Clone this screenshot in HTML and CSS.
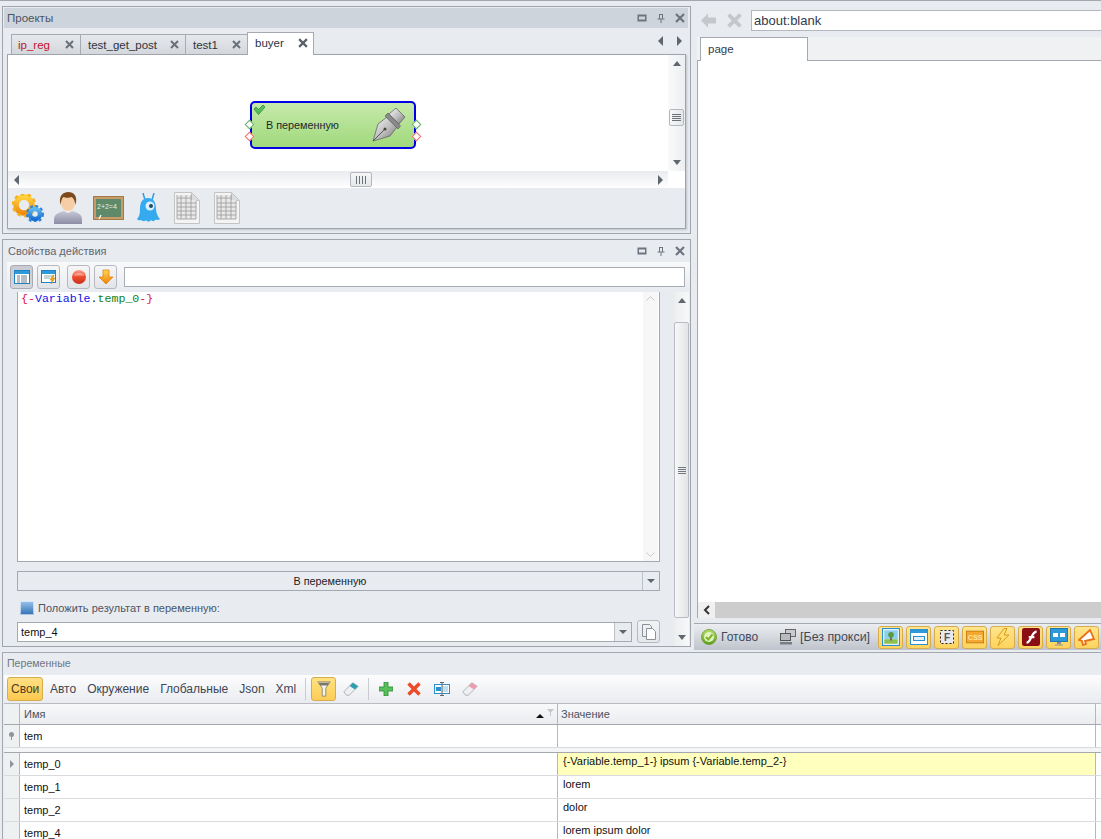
FILE: index.html
```html
<!DOCTYPE html>
<html lang="ru">
<head>
<meta charset="utf-8">
<title>Проекты</title>
<link rel="stylesheet" href="styles.css">
</head>
<body>
<svg class="defs" aria-hidden="true"><defs>
<linearGradient id="gSteel" x1="0" y1="0" x2="1" y2="1"><stop offset="0" stop-color="#f8f8f8"/><stop offset=".55" stop-color="#bcbcbc"/><stop offset="1" stop-color="#707070"/></linearGradient>
<linearGradient id="gGear" x1="0" y1="0" x2="0" y2="1"><stop offset="0" stop-color="#ffd23c"/><stop offset="1" stop-color="#f08a10"/></linearGradient>
<linearGradient id="gGearB" x1="0" y1="0" x2="0" y2="1"><stop offset="0" stop-color="#5cb8f0"/><stop offset="1" stop-color="#1a6fd0"/></linearGradient>
<linearGradient id="gBody" x1="0" y1="0" x2="0" y2="1"><stop offset="0" stop-color="#c8c8d8"/><stop offset="1" stop-color="#8c8ca4"/></linearGradient>
<linearGradient id="gRed" x1="0" y1="0" x2="0" y2="1"><stop offset="0" stop-color="#f8a08c"/><stop offset=".5" stop-color="#ee4b2c"/><stop offset="1" stop-color="#c8301c"/></linearGradient>
<linearGradient id="gOrange" x1="0" y1="0" x2="0" y2="1"><stop offset="0" stop-color="#ffd84a"/><stop offset="1" stop-color="#f08010"/></linearGradient>
<linearGradient id="gGreen" x1="0" y1="0" x2="0" y2="1"><stop offset="0" stop-color="#b6e06a"/><stop offset="1" stop-color="#5c9e1c"/></linearGradient>
<linearGradient id="gBlue" x1="0" y1="0" x2="0" y2="1"><stop offset="0" stop-color="#9cc4ec"/><stop offset="1" stop-color="#2f6fb4"/></linearGradient>
</defs></svg>

<div class="app">
  <div class="top">
    <div class="left">
      <section class="panel projects">
        <header class="title title-active">
          <span class="title-text">Проекты</span>
          <span class="win-btns">
            <svg class="w" viewBox="0 0 10 8"><path d="M.5.5h9v7h-9zM2 2.500h6v3H2z" fill="#6d7480" fill-rule="evenodd"/></svg>
            <svg class="w" viewBox="0 0 10 10"><path d="M3 1h4v4.500h1.500V6.500H5.500V10h-1V6.500H1.500V5.500H3zM4 2v3.500h2V2z" fill="#6d7480" fill-rule="evenodd"/></svg>
            <svg class="w" viewBox="0 0 10 10"><path d="M1 1l8 8M9 1L1 9" stroke="#6d7480" stroke-width="2.200"/></svg>
          </span>
        </header>
        <div class="tabs">
          <div class="tab tab-ip"><span class="red">ip_reg</span><svg class="x" viewBox="0 0 9 9"><path d="M1 1l7 7M8 1L1 8" stroke="#6a7078" stroke-width="2"/></svg></div>
          <div class="tab tab-post"><span>test_get_post</span><svg class="x" viewBox="0 0 9 9"><path d="M1 1l7 7M8 1L1 8" stroke="#6a7078" stroke-width="2"/></svg></div>
          <div class="tab tab-t1"><span>test1</span><svg class="x" viewBox="0 0 9 9"><path d="M1 1l7 7M8 1L1 8" stroke="#6a7078" stroke-width="2"/></svg></div>
          <div class="tab tab-on"><span>buyer</span><svg class="x" viewBox="0 0 9 9"><path d="M1 1l7 7M8 1L1 8" stroke="#5b626c" stroke-width="2"/></svg></div>
          <div class="tab-nav"><i class="arr arr-l"></i><i class="arr arr-r"></i></div>
        </div>
        <div class="box">
          <div class="canvas-row">
            <div class="canvas">
              <div class="node">
                <svg class="node-check" viewBox="0 0 12 10"><path d="M1 4l2-2 2.500 2.500L10 0l2 2-6.500 7.500z" fill="#56c05a" stroke="#2e8a3a" stroke-width=".8"/></svg>
                <span class="node-text">В переменную</span>
                <svg class="nib" viewBox="0 0 34 34"><path d="M15 9L6 16 1 33 18 28 25 19z" fill="url(#gSteel)" stroke="#666" stroke-width=".8"/><path d="M1 33L12 22" stroke="#555"/><circle cx="13" cy="21" r="1.500" fill="#444"/><path d="M13 8l13 13 2.500-3L16 5z" fill="#8a8a8a" stroke="#555" stroke-width=".6"/><path d="M17 6L24 0l9 9-6 7z" fill="url(#gSteel)" stroke="#666" stroke-width=".8"/></svg>
                <i class="port port-g port-lt"></i><i class="port port-r port-lb"></i>
                <i class="port port-g port-rt"></i><i class="port port-r port-rb"></i>
              </div>
            </div>
            <div class="vbar">
              <i class="arr arr-u"></i>
              <div class="vthumb"><b></b><b></b><b></b><b></b></div>
              <i class="arr arr-d"></i>
            </div>
          </div>
          <div class="hbar">
            <i class="arr arr-l"></i>
            <div class="hthumb"><b></b><b></b><b></b><b></b></div>
            <i class="arr arr-r"></i>
          </div>
          <div class="tools">
            <svg class="t-gears" viewBox="0 0 32 28"><circle cx="12" cy="11" r="8" fill="none" stroke="url(#gGear)" stroke-width="5.500"/><circle cx="12" cy="11" r="11" fill="none" stroke="#f7b020" stroke-width="2.500" stroke-dasharray="3.500 3.400"/><circle cx="23" cy="20" r="5" fill="none" stroke="url(#gGearB)" stroke-width="4.500"/><circle cx="23" cy="20" r="8" fill="none" stroke="#2a84dc" stroke-width="2" stroke-dasharray="3 2.400"/></svg>
            <svg class="t-user" viewBox="0 0 28 32"><path d="M0 32v-5c0-5 6-7 10-8h8c4 1 10 3 10 8v5z" fill="url(#gBody)"/><path d="M10 19l4 2 4-2-1-3h-6z" fill="#f0f0f0"/><ellipse cx="14" cy="11" rx="7" ry="8" fill="#f6cda4"/><path d="M6.500 13C4 3 10 0 14 0c6 0 10 4 7.500 13-.5-4-2-7-4-8-2 1-6 1-8 0-1.500 1-2.500 4-3 8z" fill="#7c4a1c"/></svg>
            <svg class="t-board" viewBox="0 0 31 24"><rect x=".5" y=".5" width="30" height="23" fill="#c89c68" stroke="#a27a4a"/><rect x="3" y="3" width="25" height="18" fill="#5f8a6a"/><text x="4" y="13" class="bt">2+2=4</text><path d="M6 23l2-4" stroke="#fff" stroke-width="1.200"/></svg>
            <svg class="t-alien" viewBox="0 0 24 30"><path d="M9 7L7 0M16 7l2-7" stroke="#2f9ce6" stroke-width="1.500" fill="none"/><path d="M12 5c6 0 8 5 8 11 0 4 2 8 4 10-2 2-4 0-5 1-1 2-3 1-4 0-1 2-4 2-5 0-1 2-4 1-5 0-1 0-3 1-4-1 2-2 3-5 3-10C4 10 6 5 12 5z" fill="#36aaee"/><circle cx="14" cy="13" r="4.500" fill="#d8f0ff"/><circle cx="15" cy="13" r="2" fill="#244a68"/></svg>
            <svg class="t-sheet" viewBox="0 0 26 32"><path d="M.5.5h17l8 8v23H.5z" fill="#f4f4f4" stroke="#c4c4c4"/><path d="M17.500.5v8h8z" fill="#dcdcdc" stroke="#c4c4c4"/><path d="M3 3h14v5H3zM3 8h19v19H3z" fill="#e8e8e8"/><path d="M3 3v24M7 3v24M12 3v24M17 3v24M22 9v18M3 6h14M3 11h19M3 15h19M3 19h19M3 23h19M3 27h19" stroke="#9a9a9a" stroke-width=".8" fill="none"/></svg>
            <svg class="t-sheet" viewBox="0 0 26 32"><path d="M.5.5h17l8 8v23H.5z" fill="#f4f4f4" stroke="#c4c4c4"/><path d="M17.500.5v8h8z" fill="#dcdcdc" stroke="#c4c4c4"/><path d="M3 3h14v5H3zM3 8h19v19H3z" fill="#e8e8e8"/><path d="M3 3v24M7 3v24M12 3v24M17 3v24M22 9v18M3 6h14M3 11h19M3 15h19M3 19h19M3 23h19M3 27h19" stroke="#9a9a9a" stroke-width=".8" fill="none"/></svg>
          </div>
        </div>
      </section>

      <section class="panel props">
        <header class="title">
          <span class="title-text">Свойства действия</span>
          <span class="win-btns">
            <svg class="w" viewBox="0 0 10 8"><path d="M.5.5h9v7h-9zM2 2.500h6v3H2z" fill="#6d7480" fill-rule="evenodd"/></svg>
            <svg class="w" viewBox="0 0 10 10"><path d="M3 1h4v4.500h1.500V6.500H5.500V10h-1V6.500H1.500V5.500H3zM4 2v3.500h2V2z" fill="#6d7480" fill-rule="evenodd"/></svg>
            <svg class="w" viewBox="0 0 10 10"><path d="M1 1l8 8M9 1L1 9" stroke="#6d7480" stroke-width="2.200"/></svg>
          </span>
        </header>
        <div class="props-bar">
          <button class="tb tb-on"><svg viewBox="0 0 16 16"><rect x=".5" y="1.500" width="15" height="13" fill="#fff" stroke="#1f82c4"/><rect x="1" y="2" width="14" height="3" fill="#2c9ad8"/><path d="M3 7h3M7 7h6M3 9h3M7 9h6M3 11h3M7 11h6M3 13h3M7 13h6" stroke="#6d7c8c"/></svg></button>
          <button class="tb"><svg viewBox="0 0 16 16"><rect x=".5" y="1.500" width="14" height="12" fill="#fff" stroke="#1f82c4"/><rect x="1" y="2" width="13" height="3" fill="#2c9ad8"/><path d="M3 7h8M3 9h6" stroke="#8aa"/><path d="M12 6l-3 5h2l-1 4 4-6h-2l1-3z" fill="#e8a820" stroke="#b88010" stroke-width=".5"/></svg></button>
          <button class="tb tb-gap"><svg viewBox="0 0 16 16"><circle cx="8" cy="8" r="7" fill="url(#gRed)"/><path d="M2.500 6.500C4 3 12 3 13.500 6.500" fill="#fff" fill-opacity=".35"/></svg></button>
          <button class="tb"><svg viewBox="0 0 16 16"><path d="M5 1h6v7h4l-7 7-7-7h4z" fill="url(#gOrange)" stroke="#d87808" stroke-width=".7"/></svg></button>
          <input class="props-input" type="text" aria-label="Фильтр">
        </div>
        <div class="props-body">
          <div class="props-main">
            <div class="editor">
              <div class="code"><span class="c-r">{-</span><span class="c-b">Variable</span><span class="c-k">.</span><span class="c-g">temp_0</span><span class="c-r">-}</span></div>
              <div class="ed-scroll"><svg class="chev" viewBox="0 0 9 5"><path d="M.5 4.500l4-4 4 4" fill="none" stroke="#c8c8c8"/></svg><svg class="chev" viewBox="0 0 9 5"><path d="M.5.500l4 4 4-4" fill="none" stroke="#c8c8c8"/></svg></div>
            </div>
            <div class="drop"><span class="drop-text">В переменную</span><span class="drop-btn"><i class="arr arr-d"></i></span></div>
            <div class="check-row">
              <svg class="save" viewBox="0 0 14 14"><rect width="14" height="14" fill="url(#gBlue)"/><rect x=".5" y=".5" width="13" height="13" fill="none" stroke="#fff" stroke-opacity=".6"/></svg>
              <span>Положить результат в переменную:</span>
            </div>
            <div class="combo-row">
              <div class="combo"><span>temp_4</span><span class="combo-btn"><i class="arr arr-d"></i></span></div>
              <button class="copy"><svg viewBox="0 0 14 16"><path d="M.5.500h7l2 2v10h-9z" fill="#eef0f2" stroke="#8a9098"/><path d="M4.500 4.500h6l3 3v8h-9z" fill="#fff" stroke="#8a9098"/></svg></button>
            </div>
          </div>
          <div class="props-scroll">
            <i class="arr arr-u"></i>
            <div class="pthumb"><b></b><b></b><b></b><b></b></div>
            <i class="arr arr-d"></i>
          </div>
        </div>
      </section>
    </div>

    <div class="right">
      <div class="nav">
        <svg class="nav-ic" viewBox="0 0 15 14"><path d="M7 0v4h8v6H7v4L0 7z" fill="#c4c8ca"/></svg>
        <svg class="nav-ic nav-x" viewBox="0 0 14 14"><path d="M1.500 1.500l11 11M12.500 1.500l-11 11" stroke="#c4c8ca" stroke-width="3.600"/></svg>
        <div class="addr">about:blank</div>
      </div>
      <div class="pagetabs"><div class="pagetab">page</div></div>
      <div class="view">
        <div class="page"></div>
        <div class="view-h"><span class="view-l"><svg viewBox="0 0 7 10"><path d="M6 1L2 5l4 4" fill="none" stroke="#333" stroke-width="2"/></svg></span><span class="view-track"></span></div>
      </div>
      <div class="status">
        <svg class="ok" viewBox="0 0 16 16"><circle cx="8" cy="8" r="7.500" fill="url(#gGreen)" stroke="#6a9a28" stroke-width=".8"/><circle cx="8" cy="8" r="5" fill="#e2f2c0"/><path d="M5 8l2.300 2.500L11.500 5.500" stroke="#7cb42c" stroke-width="2" fill="none"/></svg>
        <span class="st-ready">Готово</span>
        <svg class="pc" viewBox="0 0 16 16"><rect x="5.500" y=".5" width="10" height="7" fill="#c8cace" stroke="#666"/><rect x=".5" y="4.500" width="10" height="7" fill="#b8bac0" stroke="#555"/><path d="M0 13h12v2.500H0z" fill="#7a7e84"/></svg>
        <span class="st-proxy">[Без прокси]</span>
        <div class="st-btns">
          <span class="sb"><svg viewBox="0 0 16 16"><rect x=".5" y=".5" width="15" height="15" fill="#fff" stroke="#2c8fd0"/><rect x="2" y="2" width="12" height="8" fill="#8cd0f0"/><rect x="2" y="10" width="12" height="4" fill="#8cc050"/><path d="M8 11V6" stroke="#7a5a30" stroke-width="1.500"/><circle cx="8" cy="6" r="2.500" fill="#5a9a3a"/></svg></span>
          <span class="sb"><svg viewBox="0 0 18 16"><rect x=".5" y=".5" width="17" height="15" fill="#fff" stroke="#2c8fd0"/><rect x="1" y="1" width="16" height="3" fill="#2c9ad8"/><rect x="3.500" y="7.500" width="11" height="4" fill="#dff0fa" stroke="#2c8fd0"/></svg></span>
          <span class="sb"><svg viewBox="0 0 18 18"><rect x="2.500" y="2.500" width="13" height="13" fill="#e8e8ee" stroke="#222" stroke-dasharray="2 2"/><text x="6" y="13" class="ft">F</text></svg></span>
          <span class="sb"><svg viewBox="0 0 20 14"><rect x=".5" y=".5" width="19" height="13" fill="#f4a830" stroke="#c87810"/><text x="2" y="10.500" class="cs">CSS</text></svg></span>
          <span class="sb"><svg viewBox="0 0 14 18"><path d="M8 .5L1 10h4l-3 7.500L13 7H8l3-6.500z" fill="#ffe070" stroke="#d89a20"/></svg></span>
          <span class="sb"><svg viewBox="0 0 16 16"><rect width="16" height="16" rx="2" fill="#8a0f14"/><path d="M4 13c4 0 4-9 9-10M6 8h5" stroke="#fff" stroke-width="2" fill="none"/></svg></span>
          <span class="sb"><svg viewBox="0 0 18 18"><rect x=".5" y=".5" width="17" height="13" fill="#2c9ad8" stroke="#2478b0"/><rect x="3" y="5" width="5" height="4" fill="#fff"/><rect x="10" y="5" width="5" height="4" fill="#fff"/><path d="M7 14h4v2H7z" fill="#8a8e94"/><path d="M5 17h8" stroke="#8a8e94"/></svg></span>
          <span class="sb"><svg viewBox="0 0 18 18"><path d="M1 12L12 2l4 9-9 2 1 3-3 1-1-4z" fill="#fff" stroke="#e87018" stroke-width="1.800"/></svg></span>
        </div>
      </div>
    </div>
  </div>

  <section class="vars">
    <div class="vars-title">Переменные</div>
    <div class="vars-bar">
      <span class="vt vt-on">Свои</span>
      <span class="vt">Авто</span>
      <span class="vt">Окружение</span>
      <span class="vt">Глобальные</span>
      <span class="vt">Json</span>
      <span class="vt">Xml</span>
      <i class="sep"></i>
      <button class="ib ib-on"><svg viewBox="0 0 16 18"><path d="M1 1h14l-5 7v9H6V8z" fill="#f4f4f0" stroke="#8a8470"/><path d="M2 2h12l-2 3H4z" fill="#7c7664"/></svg></button>
      <button class="ib"><svg viewBox="0 0 18 16"><path d="M1 11L11 1l6 4L7 15H4z" fill="#eef0f2" stroke="#a8acb0"/><path d="M11 1l6 4-3.500 3.500-6-4z" fill="#2e9eb0"/></svg></button>
      <i class="sep"></i>
      <button class="ib ib-n"><svg class="ic14" viewBox="0 0 14 14"><path d="M5 0h4v5h5v4H9v5H5V9H0V5h5z" fill="#58c05a" stroke="#2c8a34" stroke-width=".8"/></svg></button>
      <button class="ib ib-n"><svg class="ic14" viewBox="0 0 14 14"><path d="M1.500 1.500l11 11M12.500 1.500l-11 11" stroke="#ee4a2a" stroke-width="3.400"/></svg></button>
      <button class="ib ib-n"><svg viewBox="0 0 16 14"><rect x=".5" y="2.500" width="15" height="9" fill="#fff" stroke="#2c8fd0"/><rect x="2" y="5" width="5" height="4" fill="#2c8fd0"/><rect x="8" y="4" width="6" height="6" fill="#bfe0f4"/><path d="M8 0v14M6 .5h4M6 13.500h4" stroke="#666"/></svg></button>
      <button class="ib ib-n"><svg viewBox="0 0 18 16"><path d="M1 11L11 1l6 4L7 15H4z" fill="#eef0f2" stroke="#a8acb0"/><path d="M11 1l6 4-3.500 3.500-6-4z" fill="#ee9ab0"/></svg></button>
    </div>
    <div class="grid">
      <div class="row head">
        <div class="c-ind"></div>
        <div class="c-name"><span>Имя</span><span class="sort"><i class="sort-up"></i><svg class="sort-f" viewBox="0 0 7 7"><path d="M0 0h7L4 3.500V7H3V3.500z" fill="#c4c8cc"/></svg></span></div>
        <div class="c-val">Значение</div>
        <div class="c-end"></div>
      </div>
      <div class="row filter">
        <div class="c-ind"><svg class="pin" viewBox="0 0 7 8"><circle cx="3.500" cy="2.500" r="2.500" fill="#8f959c"/><path d="M3 4h1v4H3z" fill="#8f959c"/></svg></div>
        <div class="c-name">tem</div>
        <div class="c-val"></div>
        <div class="c-end"></div>
      </div>
      <div class="spacer"></div>
      <div class="row data cur">
        <div class="c-ind"><i class="ind-arr"></i></div>
        <div class="c-name">temp_0</div>
        <div class="c-val">{-Variable.temp_1-} ipsum {-Variable.temp_2-}</div>
        <div class="c-end"></div>
      </div>
      <div class="row data">
        <div class="c-ind"></div>
        <div class="c-name">temp_1</div>
        <div class="c-val">lorem</div>
        <div class="c-end"></div>
      </div>
      <div class="row data">
        <div class="c-ind"></div>
        <div class="c-name">temp_2</div>
        <div class="c-val">dolor</div>
        <div class="c-end"></div>
      </div>
      <div class="row data">
        <div class="c-ind"></div>
        <div class="c-name">temp_4</div>
        <div class="c-val">lorem ipsum dolor</div>
        <div class="c-end"></div>
      </div>
    </div>
  </section>
</div>
</body>
</html>
```
FILE: styles.css
```css
* { box-sizing: border-box; }
html, body { margin: 0; padding: 0; height: 100%; overflow: hidden; }
body { background: #e8ebf0; font: 11px "Liberation Sans", Arial, sans-serif; color: #1a1a1a; }
.defs { position: absolute; width: 0; height: 0; }
button { padding: 0; font: inherit; }
svg { display: block; }

.app { width: 1101px; height: 839px; overflow: hidden; display: flex; flex-direction: column; border-top: 1px solid #a4a8ae; }
.top { display: flex; height: 651px; flex: none; }
.left { width: 692px; flex: none; padding: 5px 0 0 2px; display: flex; flex-direction: column; gap: 5px; }
.panel { width: 689px; border: 1px solid #a0a5ad; flex: none; display: flex; flex-direction: column; }

.title { height: 22px; flex: none; display: flex; align-items: center; justify-content: space-between; padding: 0 5px 0 5px; }
.title-active { height: 20px; margin: 1px 2px 0 1px; background: #cdd4dc; padding-left: 3px; padding-right: 3px; }
.title-text { font-size: 11px; color: #5d6672; }
.title-active .title-text { font-size: 11.5px; color: #4c5462; }
.win-btns { display: flex; gap: 9px; align-items: center; }
.w { width: 10px; height: 10px; }

/* projects */
.projects { height: 228px; padding-bottom: 4px; }
.tabs { height: 26px; flex: none; display: flex; align-items: flex-end; margin-left: 8px; margin-right: 4px; position: relative; z-index: 1; }
.tab { height: 20px; display: flex; align-items: center; justify-content: space-between; padding: 0 6px 0 6px; border: 1px solid #a6abb3; border-bottom: 0; margin-right: -1px; background: linear-gradient(#e6e8ec, #d3d7dc); font-size: 11.5px; color: #2e343c; }
.red { color: #c4122e; }
.tab-ip { width: 70px; }
.tab-post { width: 106px; padding-left: 7px; }
.tab-t1 { width: 63px; padding-left: 7px; }
.tab-on { width: 67px; height: 23px; background: #fff; margin-bottom: -1px; padding: 0 5px 2px 7px; color: #2a3244; margin-right: 0; }
.x { width: 9px; height: 9px; }
.tab-on .x { width: 10px; height: 10px; }
.tab-nav { margin-left: auto; display: flex; gap: 14px; height: 26px; align-items: center; padding: 0 4px 0 0; }
.box { height: 175px; flex: none; margin: 0 4px; border: 1px solid #a0a5ad; border-right: 1px solid #9ca1a9; background: #e8ebf0; box-shadow: 1px 1px 2px rgba(110,115,125,.35); display: flex; flex-direction: column; }
.canvas-row { height: 116px; flex: none; display: flex; }
.canvas { flex: 1; background: #fff; position: relative; }
.vbar { width: 17px; flex: none; background: linear-gradient(90deg, #fafafb, #eceef0); display: flex; flex-direction: column; align-items: center; padding: 6px 0 6px; }
.vthumb { width: 15px; height: 17px; margin: 43px 0 auto; border: 1px solid #b4b8be; border-radius: 2px; background: linear-gradient(90deg, #f8f8f8, #e4e6e8); display: flex; flex-direction: column; justify-content: center; align-items: center; gap: 1px; }
.vthumb b { display: block; width: 9px; height: 1px; background: #6c727a; }
.hbar { height: 17px; flex: none; background: linear-gradient(#fff, #fff) right / 17px 100% no-repeat, linear-gradient(#e9ebee, #fff); display: flex; align-items: center; padding: 0 22px 0 6px; }
.hthumb { width: 22px; height: 15px; margin-left: 331px; margin-right: auto; border: 1px solid #b4b8be; border-radius: 2px; background: linear-gradient(#f6f6f6, #e6e7e9); display: flex; justify-content: center; align-items: center; gap: 2px; }
.hthumb b { display: block; width: 1px; height: 8px; background: #6c727a; }

.arr { display: block; width: 0; height: 0; border-style: solid; flex: none; }
.arr-l { border-width: 5px 5px 5px 0; border-color: transparent #5f6670 transparent transparent; }
.arr-r { border-width: 5px 0 5px 5px; border-color: transparent transparent transparent #5f6670; }
.arr-u { border-width: 0 4.500px 5px 4.500px; border-color: transparent transparent #5f6670 transparent; }
.arr-d { border-width: 5px 4.500px 0 4.500px; border-color: #5f6670 transparent transparent transparent; }

.node { position: absolute; left: 242px; top: 46px; width: 166px; height: 48px; border: 2px solid #0000e6; border-radius: 5px; background: linear-gradient(#c6e9ab, #a1d97c); display: flex; align-items: center; justify-content: space-between; padding: 0 8px 0 14px; }
.node-text { font-size: 10.8px; color: #20282a; }
.node-check { position: absolute; left: 1px; top: 2px; width: 12px; height: 10px; }
.nib { width: 34px; height: 34px; margin-top: -1px; }
.port { position: absolute; width: 7px; height: 7px; transform: rotate(45deg); background: #fff; border: 1px solid; }
.port-g { border-color: #5eae5e; }
.port-r { border-color: #f06a6a; }
.port-lt { left: -6px; top: 18px; }
.port-lb { left: -6px; top: 30px; }
.port-rt { right: -6px; top: 18px; }
.port-rb { right: -6px; top: 30px; }

.tools { flex: 1; display: flex; align-items: center; padding: 0 0 0 4px; background: #e8ebf0; }
.t-gears { width: 32px; height: 28px; }
.t-user { width: 28px; height: 32px; margin-left: 10px; }
.t-board { width: 31px; height: 24px; margin-left: 11px; }
.t-alien { width: 24px; height: 30px; margin-left: 12px; }
.t-sheet { width: 26px; height: 32px; margin-left: 14px; }
.bt { font: 7px "Liberation Sans", sans-serif; fill: #e4f0e6; }

/* props */
.props { height: 408px; }
.props-bar { height: 30px; flex: none; margin-left: 4px; display: flex; align-items: center; padding: 0 5px 0 3px; background: linear-gradient(#f8f9fa, #e8ebf0); gap: 4px; }
.tb { width: 23px; height: 24px; border: 1px solid #b6bac0; border-radius: 3px; background: linear-gradient(#f6f6f7, #e2e4e8); display: flex; align-items: center; justify-content: center; }
.tb svg { width: 16px; height: 16px; }
.tb-on { background: linear-gradient(#c8ccd2, #d4d7dc); border-color: #a8acb2; }
.tb-gap { margin-left: 3px; }
.props-input { flex: 1; height: 20px; margin-left: 3px; border: 1px solid #a8adb4; background: #fff; padding: 0; }
.props-body { flex: 1; display: flex; min-height: 0; padding: 0 1px 0 14px; gap: 14px; }
.props-main { width: 643px; flex: none; display: flex; flex-direction: column; }
.editor { height: 270px; flex: none; background: #fff; border: 1px solid #a4a9b0; border-top: 0; display: flex; }
.code { flex: 1; font: 11.6px/1 "Liberation Mono", "Courier New", monospace; padding: 1px 0 0 3px; }
.c-r { color: #e0103a; }
.c-b { color: #1010e8; }
.c-g { color: #0e8216; }
.c-k { color: #222; }
.ed-scroll { width: 15px; margin-right: 1px; background: #f7f7f8; display: flex; flex-direction: column; justify-content: space-between; align-items: center; padding: 4px 0 4px; }
.chev { width: 9px; height: 5px; }
.drop { height: 20px; flex: none; margin-top: 9px; border: 1px solid #a4a9b0; background: #e8ebf0; display: flex; align-items: center; }
.drop-text { flex: 1; text-align: center; font-size: 10.8px; color: #222; }
.drop-btn, .combo-btn { width: 17px; height: 100%; border-left: 1px solid #bcc0c6; display: flex; align-items: center; justify-content: center; flex: none; }
.drop-btn .arr, .combo-btn .arr { border-width: 4px 4px 0 4px; }
.check-row { margin-top: 10px; height: 14px; flex: none; display: flex; align-items: center; padding-left: 3px; gap: 4px; font-size: 11px; color: #4d5564; }
.save { width: 14px; height: 14px; }
.combo-row { margin-top: 5px; height: 23px; flex: none; display: flex; align-items: center; gap: 5px; }
.combo { flex: 1; height: 20px; border: 1px solid #a4a9b0; background: #fff; display: flex; align-items: center; justify-content: space-between; padding-left: 3px; font-size: 11px; color: #111; }
.combo-btn { background: #e8ebf0; }
.copy { width: 23px; height: 23px; border: 1px solid #b6bac0; border-radius: 3px; background: linear-gradient(#f2f3f5, #e4e6ea); display: flex; align-items: center; justify-content: center; }
.copy svg { width: 14px; height: 16px; }
.props-scroll { width: 15px; flex: none; display: flex; flex-direction: column; align-items: center; padding: 6px 0 6px; background: linear-gradient(90deg, #eceef0, #f8f8f9); }
.pthumb { width: 15px; height: 296px; margin: 19px 0 auto; border: 1px solid #b8bcc2; border-radius: 2px; background: linear-gradient(90deg, #f8f8f8, #e2e4e6); display: flex; flex-direction: column; align-items: center; justify-content: center; gap: 1px; }
.pthumb b { display: block; width: 8px; height: 1px; background: #747a82; }

/* browser */
.right { flex: 1; margin-left: 2px; display: flex; flex-direction: column; min-width: 0; }
.nav { height: 36px; flex: none; display: flex; align-items: center; padding: 2px 0 0 7px; }
.nav-ic { width: 15px; height: 15px; }
.nav-x { margin-left: 11px; }
.addr { margin-left: 9px; flex: 1; height: 21px; border: 1px solid #b4b8be; border-right: 0; background: #fff; font: 13px/19px "Liberation Sans", sans-serif; padding-left: 2px; color: #333a4a; }
.pagetabs { height: 24px; flex: none; background: #f0f1f3; margin-left: 3px; border-bottom: 1px solid #a4a9b0; display: flex; }
.pagetab { width: 108px; height: 24px; margin-left: 3px; background: #fff; border: 1px solid #a4a9b0; border-bottom: 0; font-size: 11.5px; padding: 5px 0 0 7px; color: #343c4c; }
.view { flex: none; margin-left: 3px; border-left: 1px solid #a4a9b0; display: flex; flex-direction: column; height: 557px; }
.page { height: 541px; flex: none; background: #fff; }
.view-h { height: 16px; flex: none; display: flex; background: #fff; }
.view-l { width: 17px; display: flex; align-items: center; justify-content: center; background: #f0f0f0; }
.view-l svg { width: 7px; height: 10px; }
.view-track { flex: 1; background: #cdcdcd; }
.status { height: 27px; flex: none; margin-top: 5px; border-top: 1px solid #a4a9b0; background: linear-gradient(#eceef1, #bfc3cb); display: flex; align-items: center; padding-left: 7px; }
.ok { width: 16px; height: 16px; }
.st-ready { margin-left: 4px; font-size: 12px; color: #40485a; }
.pc { width: 16px; height: 16px; margin-left: 22px; }
.st-proxy { margin-left: 4px; font-size: 12.4px; color: #40485a; white-space: nowrap; }
.st-btns { display: flex; gap: 3px; margin-left: 8px; }
.sb { width: 25px; height: 23px; flex: none; border: 1px solid #d8ab4c; border-radius: 3px; background: linear-gradient(#ffe58e, #fdd35c); display: flex; align-items: center; justify-content: center; }
.sb svg { width: 18px; height: 18px; }
.ft { font: bold 10px "Liberation Sans", sans-serif; fill: #555; }
.cs { font: bold 8px "Liberation Sans", sans-serif; fill: #ffe9a0; }

/* variables */
.vars { flex: 1; margin-left: 2px; border-top: 1px solid #a4a9b0; border-left: 1px solid #a4a9b0; display: flex; flex-direction: column; min-height: 0; }
.vars-title { height: 22px; flex: none; padding: 4px 0 0 4px; font-size: 10.6px; color: #6d7684; }
.vars-bar { height: 28px; flex: none; margin-left: 1px; background: linear-gradient(#fdfdfe, #e9ebef); display: flex; align-items: center; padding-left: 3px; }
.vt { height: 24px; padding: 0 4px; margin-right: 1px; display: flex; align-items: center; font-size: 12px; color: #3e4656; border: 1px solid transparent; flex: none; }
.vt-on { background: linear-gradient(#ffdf84, #fcc94e); border-color: #d8ab4c; border-radius: 3px; color: #4a3c20; width: 36px; padding: 0 0 0 3px; margin-right: 2px; }
.sep { width: 1px; height: 22px; background: #c8ccd2; margin: 0 5px 0 3px; flex: none; }
.ib { width: 26px; height: 24px; border: 1px solid transparent; background: none; display: flex; align-items: center; justify-content: center; flex: none; margin-right: 1px; }
.ib svg { width: 16px; height: 16px; }
.ib .ic14 { width: 14px; height: 14px; }
.ib-on { width: 25px; margin-right: 2px; background: linear-gradient(#ffe27e, #fdcc58); border-color: #d8ab4c; border-radius: 3px; }
.ib-n { width: 24px; margin-right: 4px; }
.grid { flex: 1; min-height: 0; overflow: hidden; margin-left: 1px; border-top: 1px solid #b8bcc2; background: #fff; }
.row { display: flex; }
.head { height: 21px; background: linear-gradient(#f8f9fa, #eaecef); border-bottom: 1px solid #a4a9b0; color: #4a5260; font-size: 11px; }
.c-ind { width: 16px; flex: none; background: #eef0f2; border-right: 1px solid #b4b8be; display: flex; align-items: center; justify-content: center; }
.c-name { width: 538px; flex: none; border-right: 1px solid #b4b8be; padding-left: 4px; display: flex; align-items: center; justify-content: space-between; }
.c-val { width: 538px; flex: none; border-right: 1px solid #b4b8be; padding-left: 3px; display: flex; align-items: center; }
.c-end { flex: 1; }
.sort { display: flex; align-items: center; gap: 3px; padding-right: 3px; }
.sort-up { display: block; width: 0; height: 0; margin-top: 4px; border-style: solid; border-width: 0 4px 4px 4px; border-color: transparent transparent #111 transparent; }
.sort-f { width: 7px; height: 7px; margin-top: -4px; }
.filter { height: 23px; border-bottom: 1px solid #d8dbdf; color: #111; }
.pin { width: 7px; height: 8px; }
.spacer { height: 5px; border-bottom: 1px solid #a4a9b0; background: #f4f5f6; }
.data { height: 23px; border-bottom: 1px solid #d8dbdf; color: #111; }
.data .c-val { padding-left: 5px; align-items: flex-start; padding-top: 2px; font-size: 11px; }
.cur .c-val { background: #ffffbe; }
.ind-arr { display: block; width: 0; height: 0; border-style: solid; border-width: 4px 0 4px 4px; border-color: transparent transparent transparent #8f959c; }
```
